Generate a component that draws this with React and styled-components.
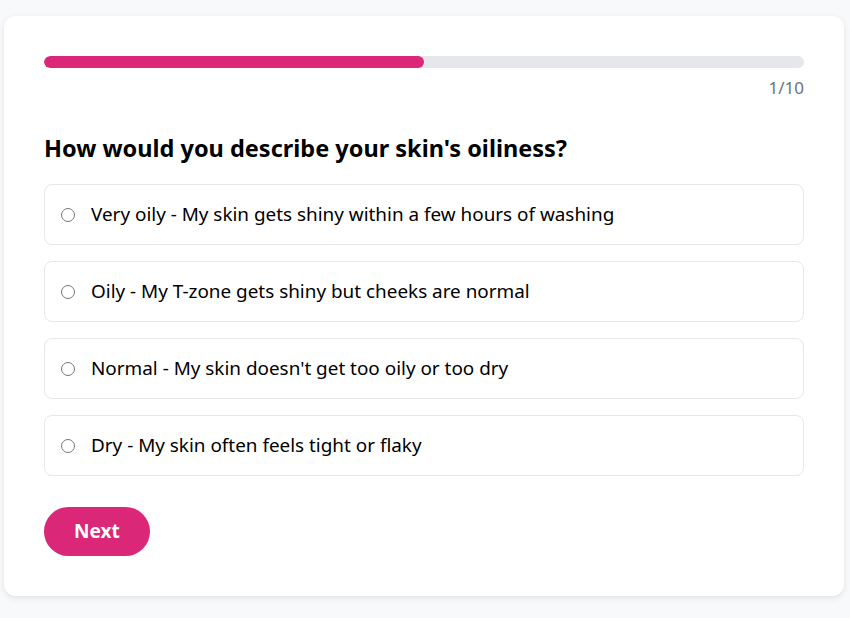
import React, { useState } from "react";
import styled, { createGlobalStyle } from "styled-components";

const GlobalStyle = createGlobalStyle`
  body {
    margin: 0;
    background: #f8f9fb;
    font-family: "Noto Sans", "Open Sans", sans-serif;
    color: #111827;
  }
`;

const Page = styled.div`
  padding: 16px 6px 16px 4px;
`;

const Card = styled.div`
  max-width: 840px;
  box-sizing: border-box;
  background: #fff;
  border-radius: 12px;
  padding: 40px;
  box-shadow: 0 2px 6px rgba(0, 0, 0, 0.1);
`;

const Track = styled.div`
  height: 12px;
  border-radius: 6px;
  background: #e5e7eb;
  overflow: hidden;
`;

const Fill = styled.div`
  height: 100%;
  border-radius: 6px;
  background: #db2777;
`;

const Counter = styled.div`
  margin-top: 8px;
  text-align: right;
  font-size: 17px;
  line-height: 24px;
  color: #6b7280;
`;

const Question = styled.h2`
  margin: 32px 0 20px;
  font-size: 23.5px;
  line-height: 32px;
  font-weight: 700;
  color: #000;
`;

const Options = styled.div`
  display: flex;
  flex-direction: column;
  gap: 16px;
`;

const Option = styled.label`
  display: flex;
  align-items: center;
  gap: 16px;
  padding: 16px;
  border: 1px solid ${p => (p.$active ? "#db2777" : "#e5e7eb")};
  border-radius: 8px;
  font-size: 18.9px;
  line-height: 27px;
  color: #000;
  cursor: pointer;
`;

const Radio = styled.input`
  margin: 1px 0 0 0;
  width: 14px;
  height: 14px;
  accent-color: #db2777;
`;

const NextButton = styled.button`
  margin-top: 31px;
  border: none;
  border-radius: 999px;
  background: #db2777;
  color: #fff;
  font-family: inherit;
  font-size: 19px;
  font-weight: 700;
  line-height: 25px;
  padding: 12px 30px;
  cursor: pointer;
`;

const choices = [
  "Very oily - My skin gets shiny within a few hours of washing",
  "Oily - My T-zone gets shiny but cheeks are normal",
  "Normal - My skin doesn't get too oily or too dry",
  "Dry - My skin often feels tight or flaky",
];

export default function App() {
  const [picked, setPicked] = useState(null);
  return (
    <Page>
      <GlobalStyle />
      <Card>
        <Track>
          <Fill style={{ width: "50%" }} />
        </Track>
        <Counter>1/10</Counter>
        <Question>How would you describe your skin's oiliness?</Question>
        <Options>
          {choices.map((c, i) => (
            <Option key={c} $active={picked === i}>
              <Radio type="radio" name="oil" checked={picked === i} onChange={() => setPicked(i)} />
              {c}
            </Option>
          ))}
        </Options>
        <NextButton>Next</NextButton>
      </Card>
    </Page>
  );
}
